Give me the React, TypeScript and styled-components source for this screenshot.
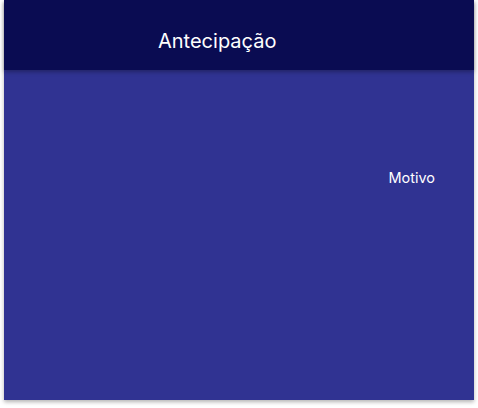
import React from "react";
import styled, { createGlobalStyle } from "styled-components";

const Global = createGlobalStyle`
  html, body { margin: 0; padding: 0; background: #ffffff; }
  body { font-family: Inter, "Noto Sans", sans-serif; }
`;

const Page = styled.div`
  padding: 0 4px 8px 4px;
`;

const Card = styled.div`
  width: 470px;
  height: 400px;
  background: #303392;
  box-shadow: 0 2px 4px rgba(0, 0, 0, 0.3);
  display: flex;
  flex-direction: column;
`;

const Header = styled.header`
  height: 70px;
  background: #0a0c52;
  box-shadow: 0 2px 4px rgba(0, 0, 0, 0.3);
  display: flex;
  align-items: center;
  padding: 12px 0 0 154px;
  box-sizing: border-box;
  position: relative;
  z-index: 1;
`;

const Title = styled.h1`
  margin: 0;
  font-family: Inter, sans-serif;
  font-size: 20px;
  font-weight: 400;
  color: #ffffff;
`;

const Body = styled.div`
  flex: 1;
  display: flex;
  justify-content: flex-end;
  padding: 99px 39px 0 0;
`;

const Label = styled.span`
  font-family: Inter, sans-serif;
  font-size: 14.5px;
  color: #ffffff;
  line-height: 17px;
`;

export default function App() {
  return (
    <Page>
      <Global />
      <Card>
        <Header>
          <Title>Antecipação</Title>
        </Header>
        <Body>
          <Label>Motivo</Label>
        </Body>
      </Card>
    </Page>
  );
}
